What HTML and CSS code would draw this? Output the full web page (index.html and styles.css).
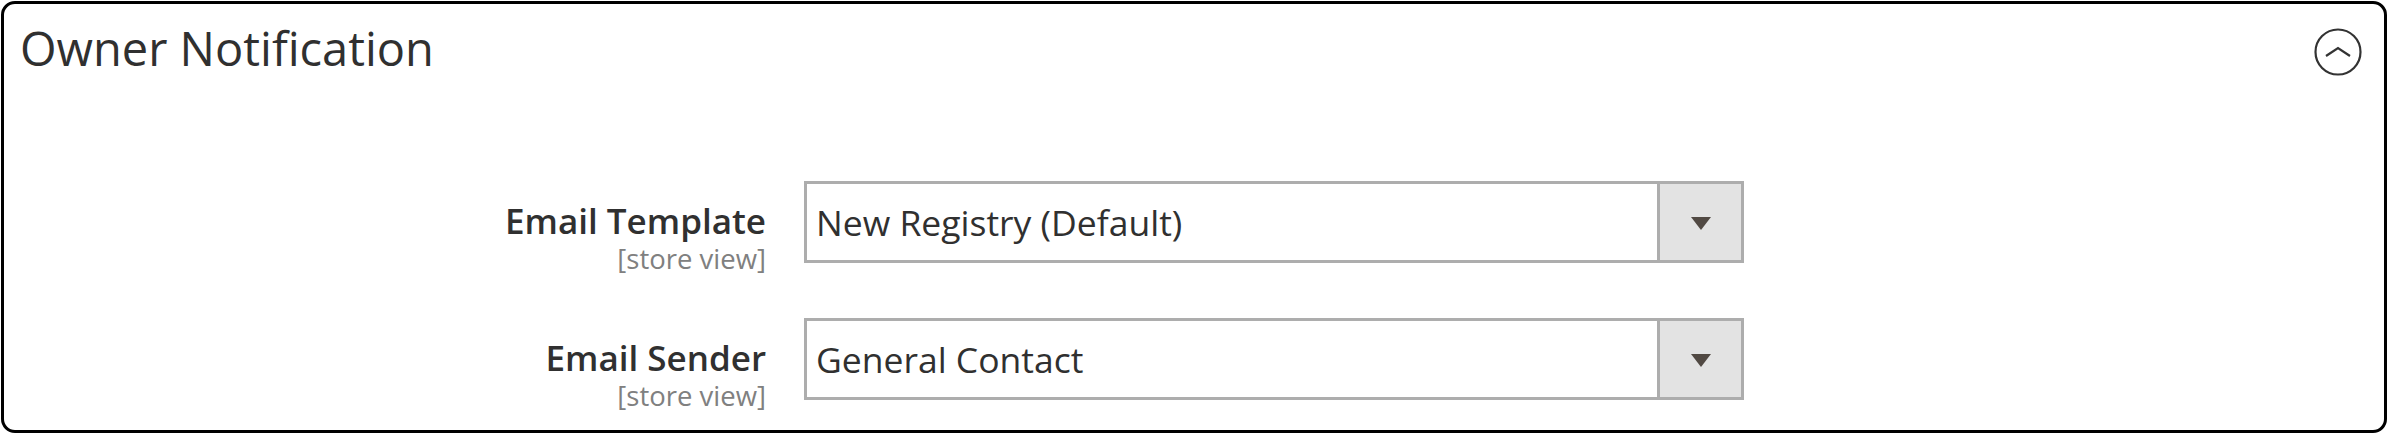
FILE: index.html
```html
<!DOCTYPE html>
<html lang="en">
<head>
<meta charset="utf-8">
<title>Owner Notification</title>
<link rel="stylesheet" href="styles.css">
</head>
<body>
<section class="panel">
  <header class="panel-head">
    <h2 class="panel-title">Owner Notification</h2>
    <svg class="collapse-icon" width="48" height="48" viewBox="0 0 48 48" aria-hidden="true">
      <circle cx="24" cy="24" r="22.5" fill="none" stroke="#333" stroke-width="2.2"/>
      <polyline points="12,28 24,20 36,28" fill="none" stroke="#333" stroke-width="2.2" stroke-linejoin="miter"/>
    </svg>
  </header>
  <div class="fieldset">
    <div class="field">
      <div class="field-label">
        <span class="label-text">Email Template</span>
        <span class="scope">[store view]</span>
      </div>
      <div class="select">
        <span class="select-value">New Registry (Default)</span>
        <span class="select-btn"><span class="caret"></span></span>
      </div>
    </div>
    <div class="field">
      <div class="field-label">
        <span class="label-text">Email Sender</span>
        <span class="scope">[store view]</span>
      </div>
      <div class="select">
        <span class="select-value">General Contact</span>
        <span class="select-btn"><span class="caret"></span></span>
      </div>
    </div>
  </div>
</section>
</body>
</html>
```
FILE: styles.css
```css
html, body {
  margin: 0;
  padding: 0;
  background: #ffffff;
}

body {
  font-family: "Open Sans", "Liberation Sans", sans-serif;
  color: #303030;
}

.panel {
  box-sizing: border-box;
  margin: 1px 0 0 1px;
  width: 2386px;
  height: 432px;
  border: 3px solid #000000;
  border-radius: 14px;
  background: #ffffff;
  overflow: hidden;
}

.panel-head {
  display: flex;
  justify-content: space-between;
  align-items: flex-start;
  padding: 17px 22px 0 16px;
}

.panel-title {
  margin: 0;
  font-size: 47px;
  line-height: 55px;
  font-weight: 400;
  color: #303030;
}

.collapse-icon {
  display: block;
  margin-top: 7px;
}

.fieldset {
  display: flex;
  flex-direction: column;
  gap: 43px;
  padding-top: 105px;
}

.field {
  display: flex;
  align-items: flex-start;
  gap: 38px;
}

.field-label {
  width: 762px;
  display: flex;
  flex-direction: column;
  align-items: flex-end;
  padding-top: 19px;
  text-align: right;
}

.label-text {
  font-size: 35px;
  line-height: 42px;
  font-weight: 600;
  color: #303030;
}

.scope {
  font-size: 27.5px;
  line-height: 33px;
  color: #808080;
}

.select {
  box-sizing: border-box;
  width: 940px;
  height: 82px;
  display: flex;
  border: 3px solid #adadad;
  background: #ffffff;
}

.select-value {
  flex: 1;
  padding-left: 9px;
  font-size: 35.5px;
  line-height: 76px;
  color: #303030;
  white-space: nowrap;
}

.select-btn {
  width: 81px;
  border-left: 3px solid #adadad;
  background: #e3e3e3;
  display: flex;
  align-items: center;
  justify-content: center;
}

.caret {
  width: 0;
  height: 0;
  border-left: 10.5px solid transparent;
  border-right: 10.5px solid transparent;
  border-top: 13px solid #514943;
  margin-top: 2px;
}
```
